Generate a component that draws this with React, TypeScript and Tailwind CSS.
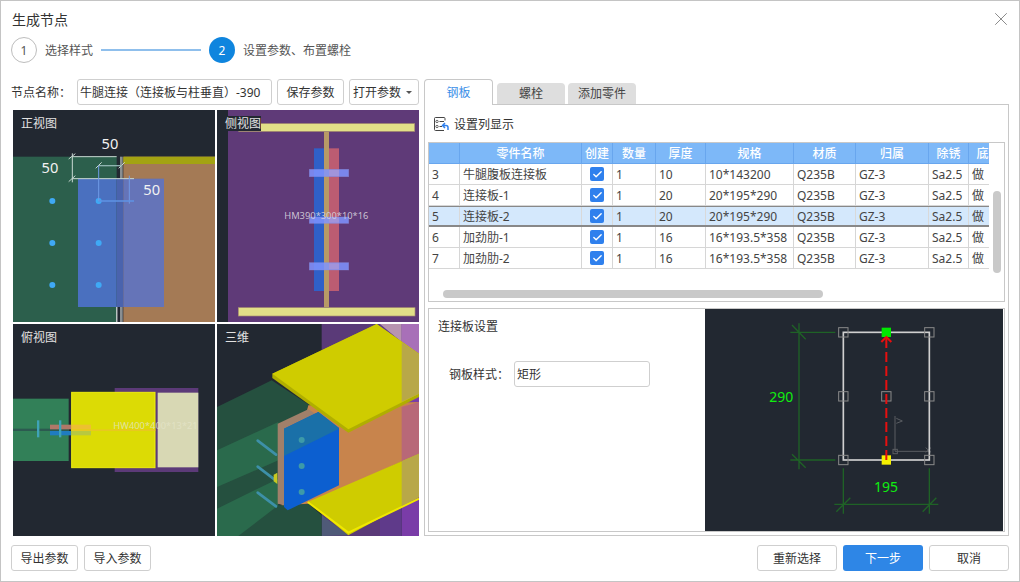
import React from "react";
import { Check, X } from "lucide-react";

interface PartRow {
  no: number;
  name: string;
  qty: number;
  thick: number;
  spec: string;
  selected?: boolean;
}

const rows: PartRow[] = [
  { no: 3, name: "牛腿腹板连接板", qty: 1, thick: 10, spec: "10*143200" },
  { no: 4, name: "连接板-1", qty: 1, thick: 20, spec: "20*195*290" },
  { no: 5, name: "连接板-2", qty: 1, thick: 20, spec: "20*195*290", selected: true },
  { no: 6, name: "加劲肋-1", qty: 1, thick: 16, spec: "16*193.5*358" },
  { no: 7, name: "加劲肋-2", qty: 1, thick: 16, spec: "16*193.5*358" },
];

const headers = ["", "零件名称", "创建", "数量", "厚度", "规格", "材质", "归属", "除锈", "底漆"];
const cols = "grid grid-cols-[31px_122px_31px_43px_50px_88px_62px_73px_40px_40px] w-[580px]";

const Btn = ({ children, className = "" }: { children: React.ReactNode; className?: string }) => (
  <button className={"h-[26px] rounded-[3px] border border-[#cfcfcf] bg-white pt-px text-xs text-[#333] " + className}>
    {children}
  </button>
);

// the drawings use the coordinates of a 3x scale, hence the large viewBox numbers
const FrontView = () => (
  <svg viewBox="9 15 606 636" className="h-[212px] w-[202px]">
    <rect x="9" y="15" width="606" height="636" fill="#222831" />
    <rect x="9" y="155" width="311" height="496" fill="#2c5f4c" />
    <rect x="319" y="605" width="3" height="46" fill="#ffffff" />
    <rect x="330" y="155" width="8" height="496" fill="#8a8f92" />
    <rect x="340" y="155" width="275" height="496" fill="#a47a55" />
    <rect x="340" y="155" width="275" height="22" fill="#a3a312" />
    <rect x="204" y="221" width="116" height="385" fill="#4a70bf" />
    <rect x="320" y="221" width="20" height="385" fill="#4a63ad" />
    <rect x="340" y="221" width="122" height="385" fill="#6574b8" />
    <g fill="#3fa9f5">
      <circle cx="127" cy="288" r="9" />
      <circle cx="127" cy="414" r="9" />
      <circle cx="127" cy="540" r="9" />
      <circle cx="266" cy="288" r="9" />
      <circle cx="266" cy="414" r="9" />
      <circle cx="266" cy="540" r="9" />
    </g>
    <g stroke="#c9d8d2" strokeWidth="3" fill="none">
      <path d="M187 155H320M187 145V232M187 221H372" />
      <path d="M176 162L196 146M176 230L196 212M257 190L275 172M326 190L344 172" />
    </g>
    <path d="M266 182H335" stroke="#8fb4b0" strokeWidth="4" fill="none" />
    <path d="M266 182V288M358 212V296" stroke="#6f9be6" strokeWidth="3" fill="none" />
    <path d="M266 288H372" stroke="#5f93e4" strokeWidth="5" />
    <g fill="#f2f2f2" textAnchor="middle" style={{ fontSize: 44 }}>
      <text x="300" y="133">50</text>
      <text x="120" y="203">50</text>
      <text x="425" y="270">50</text>
    </g>
  </svg>
);

const SideView = () => (
  <svg viewBox="6 15 606 636" className="h-[212px] w-[202px]">
    <rect x="6" y="15" width="606" height="636" fill="#222831" />
    <rect x="39" y="15" width="573" height="636" fill="#5f3a78" />
    <rect x="297" y="130" width="30" height="428" fill="#2f60c8" />
    <rect x="342" y="130" width="30" height="428" fill="#bc5c72" />
    <rect x="327" y="80" width="15" height="527" fill="#b89a66" />
    <g fill="#7f94ff" fillOpacity="0.85" stroke="#8a8fe0" strokeOpacity="0.5" strokeWidth="2">
      <rect x="283" y="193" width="118" height="22" />
      <rect x="283" y="336" width="118" height="19" />
      <rect x="283" y="473" width="118" height="22" />
    </g>
    <g fill="#b39ad0" fillOpacity="0.6">
      <rect x="342" y="195" width="30" height="18" />
      <rect x="342" y="338" width="30" height="15" />
      <rect x="342" y="475" width="30" height="18" />
    </g>
    <rect x="71" y="56" width="528" height="23" fill="#e2e088" stroke="#a88f70" strokeWidth="2" />
    <rect x="70" y="608" width="530" height="25" fill="#e2e088" stroke="#a88f70" strokeWidth="2" />
    <text x="334" y="343" textAnchor="middle" fill="#d8d3de" fillOpacity="0.9" style={{ fontSize: 28 }}>
      HM390*300*10*16
    </text>
  </svg>
);

const TopView = () => (
  <svg viewBox="9 6 606 636" className="h-[212px] w-[202px]">
    <rect x="9" y="6" width="606" height="636" fill="#222831" />
    <rect x="9" y="230" width="167" height="187" fill="#328058" />
    <rect x="9" y="320" width="167" height="7" fill="#2c5a50" />
    <rect x="314" y="198" width="251" height="252" fill="#5c3a78" />
    <rect x="185" y="211" width="250" height="226" fill="#dcdb05" stroke="#f0ee10" strokeWidth="3" />
    <rect x="443" y="212" width="122" height="224" fill="#d8d8b4" />
    <rect x="120" y="308" width="64" height="14" fill="#b07868" />
    <rect x="184" y="308" width="59" height="14" fill="#edc030" />
    <rect x="120" y="327" width="64" height="13" fill="#1f7cc0" />
    <rect x="184" y="327" width="59" height="13" fill="#b8c840" />
    <rect x="184" y="322" width="252" height="5" fill="#e8c820" />
    <rect x="81" y="295" width="7" height="51" fill="#3fa3b8" />
    <rect x="147" y="295" width="7" height="51" fill="#3fa3b8" />
    <text x="310" y="322" fill="#e4e4c8" fillOpacity="0.8" style={{ fontSize: 28 }}>HW400*400*13*21</text>
  </svg>
);

const IsoView = () => (
  <svg viewBox="6 6 606 636" className="h-[212px] w-[202px]">
    <rect x="6" y="6" width="606" height="636" fill="#222831" />
    <rect x="320" y="6" width="175" height="636" fill="#5a3a78" />
    <rect x="495" y="6" width="65" height="636" fill="#5f3a8a" />
    <rect x="560" y="6" width="52" height="636" fill="#7a3ca8" />
    <polygon points="495,6 560,6 560,60" fill="#b894b0" />
    <polygon points="560,6 612,6 612,95 560,60" fill="#a870b8" />
    <polygon points="320,580 400,640 320,642" fill="#4f5a78" />
    <polygon points="6,255 170,175 300,260 190,305 190,550 280,545 320,580 320,642 70,642 6,642" fill="#25503f" />
    <polygon points="6,385 190,300 190,415 6,495" fill="#2a6a4c" />
    <polygon points="6,560 190,470 190,550 70,642 6,642" fill="#2a6a4c" />
    <polygon points="280,250 612,240 612,395 280,545 200,550" fill="#c8844c" />
    <polygon points="560,255 612,240 612,395 560,418" fill="#b86878" />
    <polygon points="188,305 280,262 372,320 206,550 188,545" fill="#a0806a" />
    <polygon points="207,320 310,270 372,318 372,490 218,565 207,555" fill="#0c5fd0" />
    <polygon points="207,320 310,270 372,318 372,320 207,402" fill="#1a70a8" />
    <g fill="#3d9aa8">
      <circle cx="260" cy="354" r="9" />
      <circle cx="260" cy="432" r="9" />
      <circle cx="260" cy="510" r="9" />
    </g>
    <path
      d="M128 356L183 398M128 434L183 476M128 512L183 553"
      stroke="#3d90a8"
      strokeWidth="8"
      strokeLinecap="round"
    />
    <polygon points="176,458 187,452 187,486 176,478" fill="#c8c820" />
    <polygon points="278,540 612,395 612,525 400,640" fill="#cfcc00" />
    <path d="M278 540L400 632L612 530" stroke="#f0e800" strokeWidth="6" fill="none" />
    <polygon points="560,418 612,395 612,525 560,552" fill="#b8a848" />
    <polygon points="172,155 485,6 612,95 612,225 400,332 172,168" fill="#b0ae00" />
    <polygon points="172,155 485,6 612,95 612,215 400,322" fill="#cfcc00" />
    <polygon points="560,60 612,95 612,215 560,240" fill="#b8a848" />
  </svg>
);

const handles = [
  [429, 84],
  [687, 84],
  [429, 276],
  [558, 276],
  [687, 276],
  [429, 467],
  [687, 467],
];

const PlatePreview = () => (
  <svg viewBox="14 14 894 666" className="h-[222px] w-[298px]">
    <rect x="14" y="14" width="894" height="666" fill="#222831" />
    <g stroke="#1f6226" strokeWidth="4" fill="none">
      <path d="M296 57V495M270 84H405M270 467H405M275 62L316 105M275 450L316 490" />
      <path d="M429 492V628M687 492V628M402 600H714M408 622L450 580M667 622L708 580" />
    </g>
    <g stroke="#5a5d62" strokeWidth="3" fill="none">
      <path d="M584 335V441H690M588 342L606 350L588 357M676 430L692 444M692 430L676 444" />
      <rect x="578" y="435" width="13" height="13" />
    </g>
    <rect x="429" y="84" width="258" height="383" fill="none" stroke="#d0d0d0" strokeWidth="5" />
    <g fill="none" stroke="#8a8a8a" strokeWidth="3">
      {handles.map(([x, y]) => (
        <rect key={x + "-" + y} x={x - 14} y={y - 14} width="28" height="28" />
      ))}
    </g>
    <rect x="544" y="70" width="28" height="28" fill="#00e800" />
    <rect x="544" y="453" width="28" height="28" fill="#f5f000" />
    <path d="M558 467V100" stroke="#e80f0f" strokeWidth="6" strokeDasharray="30 12" />
    <path d="M543 113L558 98L573 113" stroke="#e80f0f" strokeWidth="6" fill="none" />
    <g fill="#10ee10" textAnchor="middle" style={{ fontSize: 42 }}>
      <text x="243" y="292">290</text>
      <text x="557" y="564">195</text>
    </g>
  </svg>
);

const ColumnIcon = () => (
  <svg viewBox="0 0 15 14" className="h-[14px] w-[15px]" fill="none">
    <path d="M11 3.5V1.5a1 1 0 0 0-1-1H1.5a1 1 0 0 0-1 1v11a1 1 0 0 0 1 1H10" stroke="#444" />
    <circle cx="3" cy="4.5" r="1.2" stroke="#444" strokeWidth="0.8" />
    <circle cx="3" cy="9.5" r="1.2" stroke="#444" strokeWidth="0.8" />
    <path d="M5.5 4.5H10M5.5 9.5H8" stroke="#444" />
    <path d="M14 13V10.5a2 2 0 0 0-2-2H9M11 6L8.5 8.5L11 11" stroke="#2f80ed" strokeWidth="1.5" />
  </svg>
);

const Step = ({ n, label, active }: { n: number; label: string; active?: boolean }) => (
  <div className="flex items-center">
    <div
      className={
        active
          ? "flex h-[26px] w-[26px] items-center justify-center rounded-full bg-[#0f85de] pt-px text-xs text-white"
          : "flex h-[26px] w-[26px] items-center justify-center rounded-full border border-[#bdbdbd] pt-px text-xs text-[#555]"
      }
    >
      {n}
    </div>
    <span className="ml-[8px] pt-[2px] text-xs text-[#555]">{label}</span>
  </div>
);

const Viewport = ({ label, children, boxed }: { label: string; children: React.ReactNode; boxed?: boolean }) => (
  <div className="relative h-[212px] w-[202px] overflow-hidden">
    {children}
    <span
      className={
        "absolute left-[8px] top-[6px] pt-px text-xs leading-[14px] text-[#e2e2e2] " + (boxed ? "bg-[#222831]" : "")
      }
    >
      {label}
    </span>
  </div>
);

export default function App() {
  return (
    <div className="relative flex h-[582px] w-[1020px] flex-col border border-[#c4c4c4] bg-white pl-[10px] pr-[10px] [font-family:'Noto_Sans','Noto_Sans_CJK_SC',sans-serif] [text-spacing-trim:space-all]">
      <div className="mt-[9px] flex h-[20px] items-center pl-px text-sm text-[#333]">生成节点</div>
      <X className="absolute right-[7px] top-[7px] h-[22px] w-[22px] text-[#808080]" strokeWidth={1} />

      <div className="mt-[7px] flex h-[26px] items-center">
        <Step n={1} label="选择样式" />
        <div className="ml-[8px] mr-[8px] h-[2px] w-[100px] bg-[#8fbfec]" />
        <Step n={2} label="设置参数、布置螺栓" active />
      </div>

      <div className="mt-[16px] flex h-[457px]">
        <div className="w-[408px]">
          <div className="flex h-[26px] items-center">
            <span className="w-[66px] pt-[2px] text-xs text-[#333]">节点名称：</span>
            <div className="flex h-[26px] w-[195px] items-center overflow-hidden whitespace-nowrap rounded-[3px] border border-[#cfcfcf] pl-[2px] pt-[2px] text-xs text-[#333]">
              牛腿连接（连接板与柱垂直）-390
            </div>
            <Btn className="ml-[5px] w-[67px]">保存参数</Btn>
            <Btn className="ml-[5px] flex w-[70px] items-center pl-[3px]">
              打开参数
              <span className="ml-[5px] h-0 w-0 border-x-[3px] border-t-[3px] border-x-transparent border-t-[#555]" />
            </Btn>
          </div>
          <div className="mt-[5px] grid grid-cols-[202px_202px] gap-[2px] pl-[2px]">
            <Viewport label="正视图">
              <FrontView />
            </Viewport>
            <Viewport label="侧视图" boxed>
              <SideView />
            </Viewport>
            <Viewport label="俯视图">
              <TopView />
            </Viewport>
            <Viewport label="三维">
              <IsoView />
            </Viewport>
          </div>
        </div>

        <div className="ml-[5px] flex w-[585px] flex-col">
          <div className="relative z-10 flex h-[26px] items-end">
            <div className="flex h-[26px] w-[69px] items-center justify-center rounded-t-[4px] border border-b-0 border-[#c8c8c8] bg-white text-xs text-[#3b8fe8]">
              钢板
            </div>
            <div className="ml-[4px] mb-px flex h-[21px] w-[68px] items-center justify-center rounded-t-[4px] bg-[#dedede] pt-px text-xs text-[#444]">
              螺栓
            </div>
            <div className="ml-[3px] mb-px flex h-[21px] w-[68px] items-center justify-center rounded-t-[4px] bg-[#dedede] pt-px text-xs text-[#444]">
              添加零件
            </div>
          </div>
          <div className="-mt-px flex h-[432px] flex-col border border-[#c8c8c8] px-[3px]">
            <div className="flex h-[37px] items-center pl-[6px]">
              <ColumnIcon />
              <span className="ml-[5px] pt-[2px] text-xs text-[#333]">设置列显示</span>
            </div>

            <div className="relative h-[160px] border border-[#c8c8c8]">
              <div className="w-[560px] overflow-hidden">
                <div className={cols + " h-[21px] bg-[#7db8f8]"}>
                  {headers.map((h, i) => (
                    <div
                      key={i}
                      className="flex items-center justify-center border-r border-b border-[#68a6ee] pt-px text-xs font-medium text-white"
                    >
                      {h}
                    </div>
                  ))}
                </div>
                {rows.map((r) => (
                  <div
                    key={r.no}
                    className={
                      cols +
                      (r.selected
                        ? " -mt-px h-[22px] border-y-2 border-[#888888] bg-[#d4e8fc]"
                        : " h-[21px]") +
                      " text-xs text-[#444]"
                    }
                  >
                    {[
                      r.no,
                      r.name,
                      null,
                      r.qty,
                      r.thick,
                      r.spec,
                      "Q235B",
                      "GZ-3",
                      "Sa2.5",
                      "做",
                    ].map((v, i) => (
                      <div
                        key={i}
                        className={
                          "flex items-center overflow-hidden whitespace-nowrap px-[3px] " +
                          (r.selected ? "border-r border-[#d9d9d9]" : "border-r border-b border-[#d6d6d6]") +
                          (i === 2 ? " justify-center" : " pt-px")
                        }
                      >
                        {i === 2 ? (
                          <span className="flex h-[14px] w-[14px] items-center justify-center rounded-[2px] bg-[#2f80ed]">
                            <Check className="h-[11px] w-[11px] text-white" strokeWidth={3} />
                          </span>
                        ) : (
                          v
                        )}
                      </div>
                    ))}
                  </div>
                ))}
              </div>
              <div className="absolute left-[564px] top-[48px] h-[82px] w-[8px] rounded-full bg-[#c9c9c9]" />
              <div className="absolute left-[14px] top-[147px] h-[8px] w-[380px] rounded-full bg-[#c9c9c9]" />
            </div>

            <div className="mt-[6px] flex h-[224px] border border-[#c8c8c8]">
              <div className="w-[276px] pl-[9px] pt-[8px]">
                <div className="text-xs leading-[20px] text-[#333]">连接板设置</div>
                <div className="mt-[24px] flex h-[26px] items-center pl-[11px]">
                  <span className="w-[65px] pt-[2px] text-xs text-[#333]">钢板样式：</span>
                  <div className="flex h-[26px] w-[136px] items-center rounded-[3px] border border-[#cfcfcf] pl-[2px] pt-[2px] text-xs text-[#333]">
                    矩形
                  </div>
                </div>
              </div>
              <PlatePreview />
            </div>
          </div>
        </div>
      </div>

      <div className="mt-[9px] flex h-[26px] items-center justify-between">
        <div className="flex gap-[6px]">
          <Btn className="w-[67px]">导出参数</Btn>
          <Btn className="w-[67px]">导入参数</Btn>
        </div>
        <div className="flex gap-[6px]">
          <Btn className="w-[80px]">重新选择</Btn>
          <button className="h-[26px] w-[80px] rounded-[3px] bg-[#2e86e6] pt-px text-xs text-white">下一步</button>
          <Btn className="w-[80px]">取消</Btn>
        </div>
      </div>
    </div>
  );
}
